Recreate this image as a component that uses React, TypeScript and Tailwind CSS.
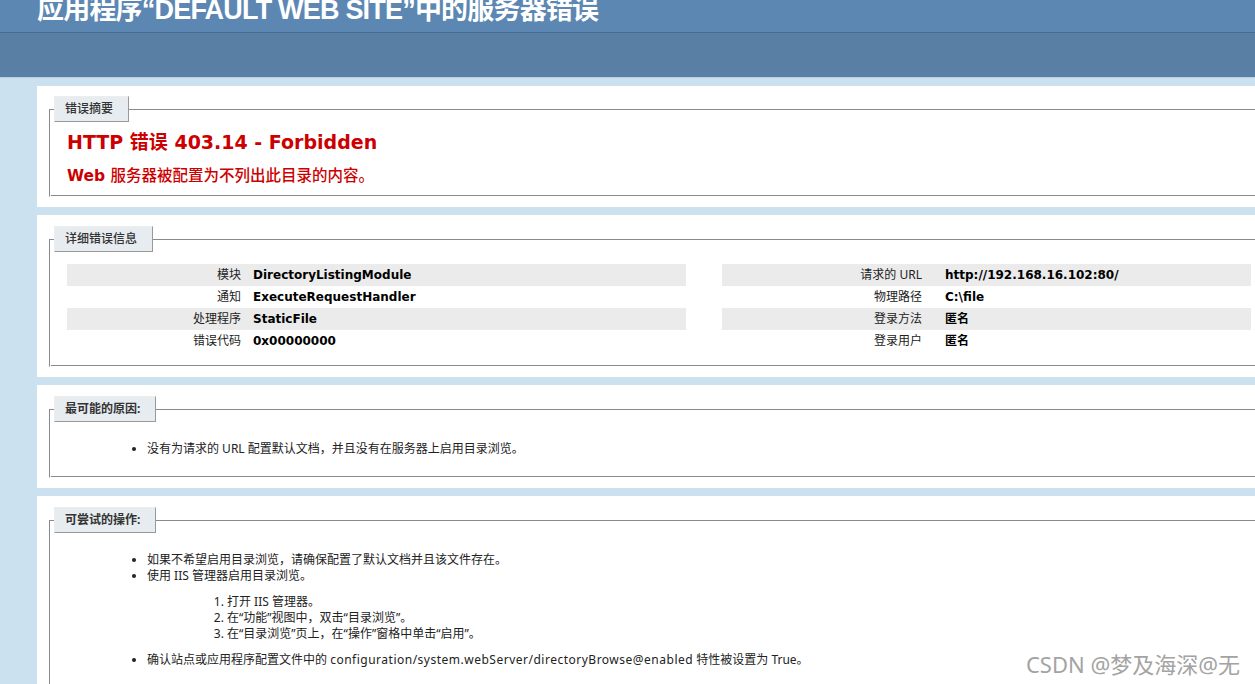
import React from 'react';

const cjk = "font-['Noto_Sans','Noto_Sans_CJK_SC',sans-serif]";
const verdana = "font-['DejaVu_Sans','Noto_Sans_CJK_SC',sans-serif]";

const fieldsetCls =
  'min-w-0 border border-t-[#8a8a8a] border-l-[#8a8a8a] border-r-white border-b-white shadow-[inset_1px_1px_0_#ffffff,inset_-1px_-1px_0_#8a8a8a] pl-[17px] pr-[15px]';

const Legend: React.FC<{ children: React.ReactNode; bold?: boolean }> = ({ children, bold }) => (
  <legend
    className={`ml-[-13px] h-[26px] pl-[10px] pr-[15px] leading-[24px] text-[12px] text-[#333] bg-[#e7ecf0] border border-t-[#ededed] border-l-[#ededed] border-r-[#999] border-b-[#999] ${cjk} ${
      bold ? 'font-bold' : 'font-medium'
    }`}
  >
    {children}
  </legend>
);

const leftRows = [
  ['模块', 'DirectoryListingModule'],
  ['通知', 'ExecuteRequestHandler'],
  ['处理程序', 'StaticFile'],
  ['错误代码', '0x00000000'],
];

const rightRows = [
  ['请求的 URL', 'http://192.168.16.102:80/'],
  ['物理路径', 'C:\\file'],
  ['登录方法', '匿名'],
  ['登录用户', '匿名'],
];

export default function App() {
  return (
    <div className={`relative w-[1255px] h-[684px] overflow-hidden bg-[#cbe1ef] ${cjk}`}>
      {/* header */}
      <div className="h-[32px] overflow-hidden bg-[#5c87b2] pl-[37px]">
        <h1 className="mt-[-6px] whitespace-nowrap text-[27px] leading-[32px] font-bold text-white font-['Liberation_Sans','Noto_Sans_CJK_SC',sans-serif] tracking-[-0.8px]">
          应用程序“DEFAULT WEB SITE”中的服务器错误
        </h1>
      </div>
      <div className="h-[46px] bg-[#5a7fa5] border-t border-t-[#4a6c8e] border-b border-b-[#c1cfdd]" />

      <div className="ml-[37px] w-[1240px]">
        {/* summary */}
        <div className="mt-[8px] bg-white py-[10px] pl-[12px] pr-[10px]">
          <fieldset className={`${fieldsetCls} pb-[10px]`}>
            <Legend>错误摘要</Legend>
            <h2 className={`mt-[9px] text-[19px] leading-[23px] font-bold text-[#cc0000] ${verdana}`}>
              HTTP 错误 403.14 - Forbidden
            </h2>
            <h3 className={`mt-[12px] text-[15.5px] leading-[20px] font-bold text-[#cc0000] ${verdana}`}>
              Web <span className="font-medium">服务器被配置为不列出此目录的内容。</span>
            </h3>
          </fieldset>
        </div>

        {/* details */}
        <div className="mt-[8px] bg-white pl-[12px] pr-[10px] pt-[11px] pb-[10px]">
          <fieldset className={`${fieldsetCls} pb-[14px]`}>
            <Legend>详细错误信息</Legend>
            <div className="mt-[12px] flex gap-[36px] text-[12px]">
              <div className="w-[619px]">
                {leftRows.map(([k, v], i) => (
                  <div key={k} className={`flex h-[22px] items-center ${i % 2 === 0 ? 'bg-[#ebebeb]' : ''}`}>
                    <span className="w-[174px] text-right text-[#222]">{k}</span>
                    <span className={`pl-[12px] font-bold text-black ${verdana}`}>{v}</span>
                  </div>
                ))}
              </div>
              <div className="flex-1">
                {rightRows.map(([k, v], i) => (
                  <div key={k} className={`flex h-[22px] items-center ${i % 2 === 0 ? 'bg-[#ebebeb]' : ''}`}>
                    <span className="w-[200px] text-right text-[#222]">{k}</span>
                    <span className={`pl-[23px] font-bold text-black ${verdana}`}>{v}</span>
                  </div>
                ))}
              </div>
            </div>
          </fieldset>
        </div>

        {/* causes */}
        <div className="mt-[8px] bg-white pl-[12px] pr-[10px] pt-[11px] pb-[10px]">
          <fieldset className={`${fieldsetCls} pb-[10px]`}>
            <Legend bold>最可能的原因:</Legend>
            <ul className="mt-[19px] mb-[10px] ml-[80px] list-disc text-[12px] leading-[16px] text-[#222]">
              <li>没有为请求的 URL 配置默认文档，并且没有在服务器上启用目录浏览。</li>
            </ul>
          </fieldset>
        </div>

        {/* actions */}
        <div className="mt-[8px] bg-white pl-[12px] pr-[10px] pt-[11px] pb-[10px]">
          <fieldset className={`${fieldsetCls} pb-[10px]`}>
            <Legend bold>可尝试的操作:</Legend>
            <ul className="mt-[19px] mb-[10px] ml-[80px] list-disc text-[12px] leading-[16px] text-[#222]">
              <li>如果不希望启用目录浏览，请确保配置了默认文档并且该文件存在。</li>
              <li>
                使用 IIS 管理器启用目录浏览。
                <ol className="my-[10px] ml-[80px] list-decimal">
                  <li>打开 IIS 管理器。</li>
                  <li>在“功能”视图中，双击“目录浏览”。</li>
                  <li>在“目录浏览”页上，在“操作”窗格中单击“启用”。</li>
                </ol>
              </li>
              <li>
                确认站点或应用程序配置文件中的{' '}
                <span className="tracking-[0.5px]">configuration/system.webServer/directoryBrowse@enabled</span>{' '}
                特性被设置为 True。
              </li>
            </ul>
          </fieldset>
        </div>
      </div>

      {/* watermark */}
      <div className="absolute right-[15px] top-[651px] text-[22px] leading-[26px] text-[#a3a3a3]">
        CSDN @梦及海深@无
      </div>
    </div>
  );
}
